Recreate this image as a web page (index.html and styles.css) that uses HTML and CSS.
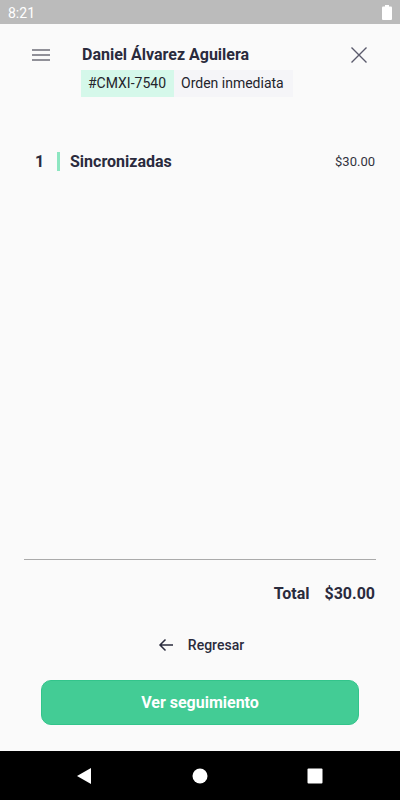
FILE: index.html
```html
<!DOCTYPE html>
<html>
<head>
    <title>Detalle de orden</title>
    <meta name="viewport" content="width=device-width, initial-scale=1.0">
    <link rel="stylesheet" href="styles.css">
</head>
<body>
    <div class="screen">
        <div class="status-bar">
            <span class="time">8:21</span>
            <svg class="battery" width="10" height="15" viewBox="0 0 10 15">
                <rect x="3" y="0" width="4" height="2" fill="#fff"/>
                <rect x="0" y="1.5" width="10" height="13.5" rx="1" fill="#fff"/>
            </svg>
        </div>

        <div class="header">
            <svg class="menu" width="24" height="24" viewBox="0 0 24 24">
                <path d="M3 7h18M3 12h18M3 17h18" stroke="#6e6e78" stroke-width="1.5" fill="none"/>
            </svg>
            <div class="info">
                <div class="name">Daniel Álvarez Aguilera</div>
                <div class="tags">
                    <span class="tag tag-code">#CMXI-7540</span>
                    <span class="tag tag-type">Orden inmediata</span>
                </div>
            </div>
            <svg class="close" width="24" height="24" viewBox="0 0 24 24">
                <path d="M4.5 4.5l15 15M19.5 4.5l-15 15" stroke="#5a5a6c" stroke-width="1.4" fill="none"/>
            </svg>
        </div>

        <div class="item">
            <span class="qty">1</span>
            <span class="bar"></span>
            <span class="item-name">Sincronizadas</span>
            <span class="price">$30.00</span>
        </div>

        <div class="spacer"></div>

        <div class="divider"></div>

        <div class="total">
            <span>Total</span>
            <span>$30.00</span>
        </div>

        <div class="back">
            <svg width="16" height="16" viewBox="0 0 16 16">
                <path d="M15 8H2M7.5 2.5L2 8l5.5 5.5" stroke="#2a2b3d" stroke-width="1.5" fill="none"/>
            </svg>
            <span>Regresar</span>
        </div>

        <button class="track">Ver seguimiento</button>

        <div class="nav-bar">
            <svg width="16" height="16" viewBox="0 0 16 16">
                <path d="M15 0v16L1 8z" fill="#fff"/>
            </svg>
            <svg width="16" height="16" viewBox="0 0 16 16">
                <circle cx="8" cy="8" r="7.5" fill="#fff"/>
            </svg>
            <svg width="16" height="16" viewBox="0 0 16 16">
                <rect x="0.5" y="0.5" width="15" height="15" rx="1" fill="#fff"/>
            </svg>
        </div>
    </div>
</body>
</html>
```

FILE: styles.css
```css
body {
    margin: 0;
    font-family: Roboto, "Noto Sans", sans-serif;
    background-color: #fafafa;
    color: #2a2b3d;
}

.screen {
    display: flex;
    flex-direction: column;
    height: 800px;
    overflow: hidden;
}

.status-bar {
    display: flex;
    align-items: center;
    justify-content: space-between;
    height: 24px;
    padding: 0 8px;
    background-color: #bbbbbb;
    color: #fff;
    font-size: 14px;
}

.time {
    padding-top: 2px;
}

.battery {
    margin-top: 1px;
}

.header {
    display: flex;
    align-items: flex-start;
    padding: 19px 29px 0 29px;
}

.menu {
    margin-right: 29px;
}

.info {
    flex: 1;
    padding-top: 2px;
}

.name {
    font-size: 16px;
    font-weight: 700;
    line-height: 19px;
}

.tags {
    display: flex;
    margin-top: 6px;
    margin-left: -1px;
}

.tag {
    padding: 4px 8px 4px 7px;
    font-size: 14px;
    line-height: 19px;
    color: #24242c;
}

.tag-code {
    background-color: #d5f8ea;
}

.tag-type {
    padding-right: 9px;
    background-color: #f5f5f8;
}

.item {
    display: flex;
    align-items: center;
    margin-top: 55px;
    padding: 0 25px 0 35px;
    height: 19px;
}

.qty {
    width: 22px;
    font-size: 16px;
    font-weight: 700;
}

.bar {
    width: 3px;
    height: 19px;
    margin-right: 10px;
    background-color: #8de6c1;
}

.item-name {
    flex: 1;
    font-size: 16px;
    font-weight: 700;
}

.price {
    font-size: 13px;
    color: #33333d;
}

.spacer {
    flex: 1;
}

.divider {
    height: 1px;
    margin: 0 24px;
    background-color: #aaaaaa;
}

.total {
    display: flex;
    justify-content: flex-end;
    gap: 15px;
    margin-top: 24px;
    padding-right: 25px;
    height: 19px;
    line-height: 19px;
    font-size: 16px;
    font-weight: 700;
}

.back {
    display: flex;
    align-items: center;
    justify-content: center;
    gap: 14px;
    margin-top: 32px;
    padding-left: 2px;
    height: 20px;
    font-size: 14px;
    font-weight: 500;
}

.track {
    margin: 25px 41px 0 41px;
    height: 45px;
    border: 1px solid #33c48b;
    border-radius: 10px;
    background-color: #43cc95;
    color: #fff;
    font-family: Roboto, "Noto Sans", sans-serif;
    font-size: 16px;
    font-weight: 700;
}

.nav-bar {
    display: flex;
    align-items: center;
    justify-content: space-between;
    height: 49px;
    margin-top: 26px;
    padding: 0 77px 0 76px;
    background-color: #000;
}
```
